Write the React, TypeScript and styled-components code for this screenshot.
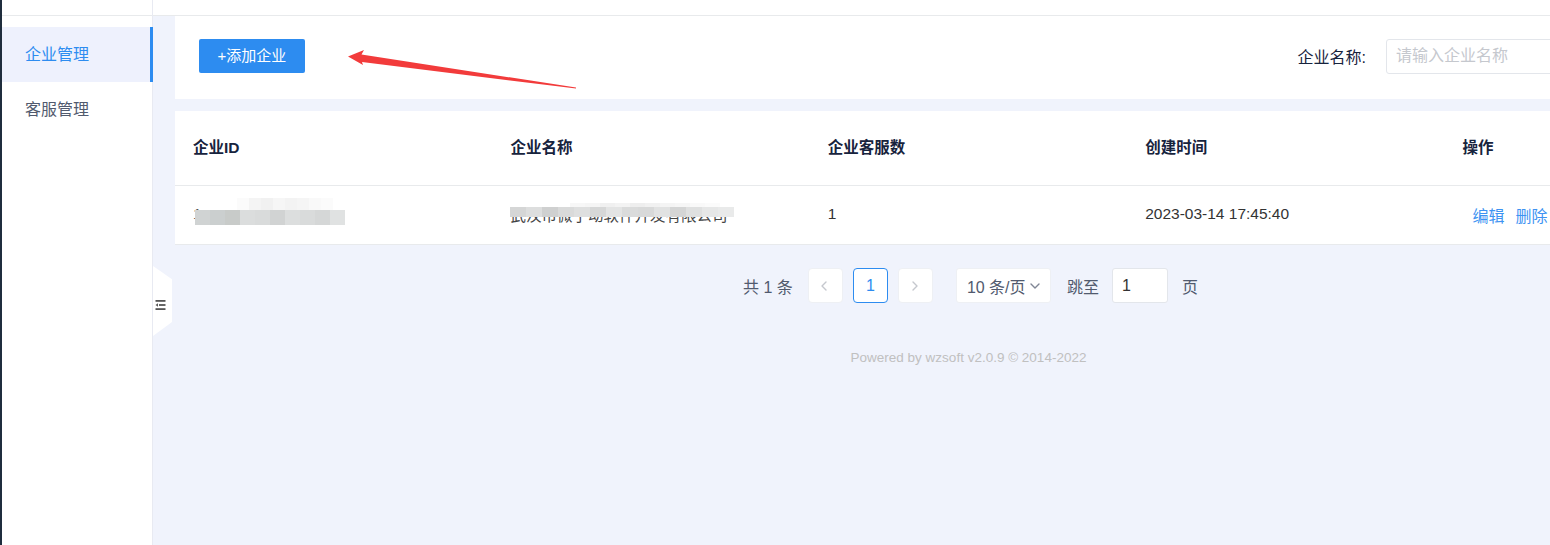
import styled, { createGlobalStyle } from 'styled-components';

const GlobalStyle = createGlobalStyle`
  html, body {
    margin: 0;
    padding: 0;
    overflow: hidden;
    background: #f0f3fc;
  }
  body {
    font-family: 'Liberation Sans', 'Noto Sans CJK SC', sans-serif;
    color: #333;
  }
  * {
    box-sizing: border-box;
  }
`;

const Shell = styled.div`
  position: relative;
  display: flex;
  width: 1784px;
  height: 545px;
`;

const DarkStrip = styled.div`
  width: 2px;
  background: #1f2d3d;
`;

const Sidebar = styled.aside`
  width: 151px;
  background: #fff;
  border-right: 1px solid #e8eaf2;
  display: flex;
  flex-direction: column;
`;

const SideTop = styled.div`
  height: 16px;
  border-bottom: 1px solid #e8eaec;
`;

const Menu = styled.nav`
  padding-top: 11px;
  display: flex;
  flex-direction: column;
`;

const MenuItem = styled.div<{ $active?: boolean }>`
  height: 55px;
  display: flex;
  align-items: center;
  padding-left: 23px;
  padding-bottom: 3px;
  font-size: 16px;
  color: ${(p) => (p.$active ? '#2d8cf0' : '#515a6e')};
  background: ${(p) => (p.$active ? '#eef1fd' : 'transparent')};
  border-right: 3px solid ${(p) => (p.$active ? '#2d8cf0' : 'transparent')};
  margin-right: -1px;
`;

const Main = styled.main`
  flex: 1;
  display: flex;
  flex-direction: column;
`;

const TopBar = styled.header`
  height: 16px;
  background: #fff;
  border-bottom: 1px solid #e8eaec;
`;

const Content = styled.section`
  position: relative;
  flex: 1;
  padding: 0 22px;
  display: flex;
  flex-direction: column;
`;

const Toolbar = styled.div`
  height: 83px;
  background: #fff;
  display: flex;
  align-items: center;
  padding: 0 176px 0 24px;
`;

const PrimaryButton = styled.button`
  height: 34px;
  width: 106px;
  border: none;
  border-radius: 2px;
  background: #2d8cf0;
  color: #fff;
  font-family: inherit;
  font-size: 15px;
  line-height: 32px;
  padding: 0;
  cursor: pointer;
  margin-top: -3px;
`;

const SearchGroup = styled.div`
  margin-left: auto;
  display: flex;
  align-items: center;
  gap: 20px;
  margin-top: -3px;
`;

const Label = styled.span`
  font-size: 16px;
  color: #17233d;
`;

const TextInput = styled.input<{ $width: number }>`
  width: ${(p) => p.$width}px;
  height: 35px;
  border: 1px solid #e3e6eb;
  border-radius: 3px;
  padding: 0 9px;
  font-family: inherit;
  font-size: 16px;
  color: #333;
  background: #fff;
  outline: none;
  &::placeholder {
    color: #c5c8ce;
  }
`;

const TablePanel = styled.div`
  margin-top: 12px;
  background: #fff;
`;

const Row = styled.div<{ $head?: boolean }>`
  display: grid;
  grid-template-columns: repeat(5, 1fr);
  height: ${(p) => (p.$head ? 75 : 59)}px;
  border-bottom: 1px solid #e8eaec;
  align-items: center;
`;

const Cell = styled.div<{ $head?: boolean }>`
  position: relative;
  padding-left: 18px;
  font-size: 15.5px;
  font-weight: ${(p) => (p.$head ? 700 : 400)};
  color: ${(p) => (p.$head ? '#17233d' : '#333')};
  white-space: nowrap;
  margin-top: ${(p) => (p.$head ? '-4px' : '-2px')};
`;

const LinkButton = styled.a`
  color: #3d93f2;
  font-size: 16px;
  cursor: pointer;
  & + & {
    margin-left: 11px;
  }
`;

const Actions = styled.div`
  padding-left: 28px;
  white-space: nowrap;
`;

const Mosaic = styled.div`
  position: absolute;
  display: flex;
  flex-direction: column;
`;

const MosaicRow = styled.div`
  display: flex;
`;

const Tile = styled.span<{ $w: number; $h: number }>`
  display: block;
  width: ${(p) => p.$w}px;
  height: ${(p) => p.$h}px;
`;

const Pager = styled.div`
  margin-top: 23px;
  display: flex;
  justify-content: center;
  align-items: center;
  height: 35px;
  font-size: 16px;
  color: #515a6e;
  padding-left: 4px;
`;

const Total = styled.span`
  margin-right: 15px;
`;

const PageBox = styled.div<{ $active?: boolean }>`
  width: 35px;
  height: 35px;
  display: flex;
  align-items: center;
  justify-content: center;
  background: #fff;
  border: 1px solid ${(p) => (p.$active ? '#2d8cf0' : '#eef0f4')};
  border-radius: 4px;
  color: ${(p) => (p.$active ? '#2d8cf0' : '#c5c8ce')};
  margin-right: 10px;
`;

const SizeSelect = styled.div`
  width: 95px;
  height: 35px;
  margin-left: 13px;
  background: #fff;
  border: 1px solid #eef0f4;
  border-radius: 3px;
  display: flex;
  align-items: center;
  padding-left: 10px;
  gap: 3px;
  color: #515a6e;
`;

const JumpText = styled.span`
  margin: 0 13px 0 16px;
`;

const PageUnit = styled.span`
  margin-left: 14px;
`;

const Footer = styled.footer`
  margin-top: 47px;
  text-align: center;
  font-size: 13.5px;
  color: #c0c0c0;
`;

const Collapse = styled.div`
  position: absolute;
  left: 0;
  top: 250px;
  width: 19px;
  height: 70px;
  background: #fff;
  clip-path: polygon(0 0, 100% 19%, 100% 80%, 0 100%);
  display: flex;
  align-items: center;
  padding-left: 2px;
  padding-top: 7px;
`;

const Arrow = styled.svg`
  position: absolute;
  left: 0;
  top: 0;
  pointer-events: none;
`;

const Chevron = ({ dir }: { dir: 'left' | 'right' | 'down' }) => {
  const d =
    dir === 'left' ? 'M7 2 L3 6 L7 10' : dir === 'right' ? 'M4 2 L8 6 L4 10' : 'M2 4 L6 8 L10 4';
  return (
    <svg width="12" height="12" viewBox="0 0 12 12">
      <path d={d} fill="none" stroke="currentColor" strokeWidth="1.4" strokeLinecap="round" strokeLinejoin="round" />
    </svg>
  );
};

const OutdentIcon = () => (
  <svg width="11" height="10" viewBox="0 0 11 10">
    <rect x="0.5" y="0" width="10" height="1.8" fill="#555" />
    <rect x="4" y="4.1" width="6.5" height="1.8" fill="#555" />
    <rect x="0.5" y="8.2" width="10" height="1.8" fill="#555" />
    <path d="M0.5 5 L3 3.2 L3 6.8 Z" fill="#555" />
  </svg>
);

const idTop = ['#ffffff', '#fbfbfb', '#f4f4f4', '#f1f1f1', '#f6f6f6', '#f3f3f3', '#f5f5f5', '#f9f9f9', '#fbfbfb'];
const idBottom = ['#d0d3d3', '#cbcfcf', '#c8cbc9', '#dbdddd', '#d9dbdb', '#d1d3d3', '#dcdede', '#d9dbdb', '#d5d7d7', '#e0e2e2'];
const nameTop = ['#ffffff', '#f7f7f7', '#f5f5f5', '#f0f0f0', '#f3f3f3', '#eeeeee', '#f1f1f1', '#f4f4f4', '#f6f6f6', '#f9f9f9', '#fbfbfb'];
const nameBottom = [
  '#d5d6d6', '#dddede', '#cfd0d0', '#d9dada', '#dedfdf', '#d6d7d7', '#e3e4e4', '#dadbdb',
  '#d8d9d9', '#e1e2e2', '#d4d5d5', '#dfe0e0', '#e6e7e7', '#e9eaea',
];

export default function App() {
  return (
    <>
      <GlobalStyle />
      <Shell>
        <DarkStrip />
        <Sidebar>
          <SideTop />
          <Menu>
            <MenuItem $active>企业管理</MenuItem>
            <MenuItem>客服管理</MenuItem>
          </Menu>
        </Sidebar>
        <Main>
          <TopBar />
          <Content>
            <Toolbar>
              <PrimaryButton>+添加企业</PrimaryButton>
              <SearchGroup>
                <Label>企业名称:</Label>
                <TextInput $width={200} placeholder="请输入企业名称" />
              </SearchGroup>
            </Toolbar>
            <TablePanel>
              <Row $head>
                <Cell $head>企业ID</Cell>
                <Cell $head>企业名称</Cell>
                <Cell $head>企业客服数</Cell>
                <Cell $head>创建时间</Cell>
                <Cell $head>操作</Cell>
              </Row>
              <Row>
                <Cell>
                  <span style={{ color: '#555' }}>1</span>
                  <Mosaic style={{ left: 20, top: -7 }}>
                    <MosaicRow style={{ paddingLeft: 30 }}>
                      {idTop.map((c, i) => (
                        <Tile key={i} $w={12} $h={12} style={{ background: c }} />
                      ))}
                    </MosaicRow>
                    <MosaicRow>
                      {idBottom.map((c, i) => (
                        <Tile key={i} $w={15} $h={15} style={{ background: c }} />
                      ))}
                    </MosaicRow>
                  </Mosaic>
                </Cell>
                <Cell>
                  <span style={{ color: '#444' }}>武汉市微子动软件开发有限公司</span>
                  <Mosaic style={{ left: 18, top: 0 }}>
                    <MosaicRow style={{ paddingLeft: 45 }}>
                      {nameTop.map((c, i) => (
                        <Tile key={i} $w={15} $h={4} style={{ background: c }} />
                      ))}
                    </MosaicRow>
                    <MosaicRow>
                      {nameBottom.map((c, i) => (
                        <Tile key={i} $w={16} $h={10} style={{ background: c }} />
                      ))}
                    </MosaicRow>
                  </Mosaic>
                </Cell>
                <Cell>1</Cell>
                <Cell>2023-03-14 17:45:40</Cell>
                <Actions>
                  <LinkButton>编辑</LinkButton>
                  <LinkButton>删除</LinkButton>
                </Actions>
              </Row>
            </TablePanel>
            <Pager>
              <Total>共 1 条</Total>
              <PageBox>
                <Chevron dir="left" />
              </PageBox>
              <PageBox $active>1</PageBox>
              <PageBox>
                <Chevron dir="right" />
              </PageBox>
              <SizeSelect>
                10 条/页
                <span style={{ color: '#808695', display: 'flex' }}>
                  <Chevron dir="down" />
                </span>
              </SizeSelect>
              <JumpText>跳至</JumpText>
              <TextInput $width={56} defaultValue="1" />
              <PageUnit>页</PageUnit>
            </Pager>
            <Footer>Powered by wzsoft v2.0.9 © 2014-2022</Footer>
            <Collapse>
              <OutdentIcon />
            </Collapse>
          </Content>
        </Main>
        <Arrow width="600" height="100" viewBox="0 0 600 100">
          <polygon
            points="348,56.5 364,50 361.5,54.5 576,87.6 576,88.6 362,62 363,65"
            fill="#f23b3b"
          />
        </Arrow>
      </Shell>
    </>
  );
}
